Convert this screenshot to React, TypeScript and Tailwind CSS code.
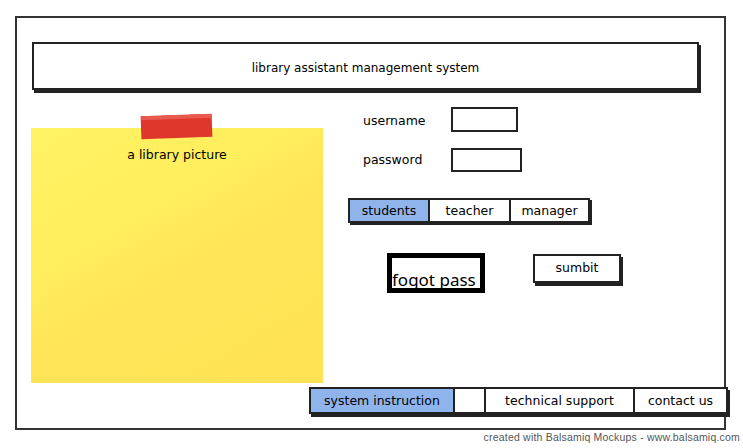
import React from "react";

const hand = { fontFamily: '"Comic Sans MS", "DejaVu Sans", sans-serif' };

export default function App() {
  return (
    <div className="relative w-[743px] h-[448px] bg-white overflow-hidden text-black" style={hand}>
      <div className="ml-[15px] mt-[16px] w-[711px] h-[414px] border-2 border-[#333]">
        {/* title */}
        <div className="ml-[15px] mt-[24px] w-[667px] h-[48px] border-2 border-[#222] shadow-[2px_3px_0_#222] flex items-center justify-center text-[12px] pt-[4px]">
          library assistant management system
        </div>

        <div className="flex items-start mt-[17px]">
          {/* sticky note */}
          <div className="relative ml-[14px] mt-[21px] w-[292px] h-[255px] bg-[linear-gradient(150deg,#fff263_0%,#ffee5e_35%,#ffe457_55%,#ffe355_100%)]">
            <div className="absolute left-[110px] top-[-13px] w-[71px] h-[23px] bg-[#e0372d] -rotate-2 shadow-[inset_0_4px_0_#e85a4e]" />
            <div className="pt-[18px] text-center text-[12.5px]">a library picture</div>
          </div>

          {/* right column */}
          <div className="ml-[25px] flex flex-col">
            <div className="flex items-center">
              <div className="ml-[15px] w-[88px] text-[12.5px] pt-[3px]">username</div>
              <div className="w-[67px] h-[25px] border-2 border-[#222]" />
            </div>
            <div className="flex items-center mt-[16px]">
              <div className="ml-[15px] w-[88px] text-[12.5px] pt-[1px]">password</div>
              <div className="w-[71px] h-[24px] border-2 border-[#222]" />
            </div>
            <div className="flex mt-[26px] w-[242px] h-[25px] border-2 border-[#222] shadow-[2px_2px_0_#222] text-[12.5px]">
              <div className="w-[80px] bg-[#8fb4ec] flex items-center justify-center border-r-2 border-[#222] pt-[2px]">students</div>
              <div className="w-[81px] flex items-center justify-center border-r-2 border-[#222] pt-[2px]">teacher</div>
              <div className="flex-1 flex items-center justify-center pt-[2px]">manager</div>
            </div>
            <div className="flex items-start mt-[30px]">
              <div className="ml-[39px] w-[98px] h-[40px] border-[5px] border-black bg-white overflow-hidden">
                <div className="pt-[12px] text-[17px] leading-[20px] text-black" style={{ fontFamily: '"Noto Sans", "DejaVu Sans", sans-serif' }}>
                  fogot pass
                </div>
              </div>
              <div className="ml-[48px] mt-[1px] w-[88px] h-[29px] border-2 border-[#222] shadow-[2px_3px_0_#222] flex items-center justify-center text-[12.5px]">
                sumbit
              </div>
            </div>
          </div>
        </div>

        {/* bottom bar */}
        <div className="flex ml-[292px] mt-[4px] w-[419px] h-[27px] border-2 border-[#222] shadow-[2px_3px_0_#222] text-[12.5px] bg-white">
          <div className="w-[144px] bg-[#8fb4ec] flex items-center justify-center border-r-2 border-[#222] pt-[2px]">system instruction</div>
          <div className="w-[31px] border-r-2 border-[#222]" />
          <div className="w-[149px] flex items-center justify-center border-r-2 border-[#222] pt-[2px]">technical support</div>
          <div className="flex-1 flex items-center justify-center pt-[2px]">contact us</div>
        </div>
      </div>
      <div className="absolute right-[3px] top-[430px] text-[10.5px] text-[#555] tracking-[0.2px]" style={{ fontFamily: '"Liberation Sans", sans-serif' }}>
        created with Balsamiq Mockups - www.balsamiq.com
      </div>
    </div>
  );
}
